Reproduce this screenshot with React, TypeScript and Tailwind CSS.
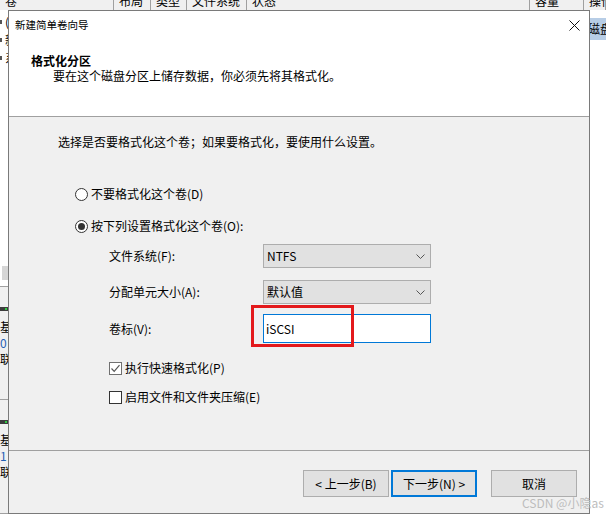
import React from 'react';

// Column headers of the disk management list behind the wizard
const headerCols = [
  { label: '卷', w: 'w-[114px]' },
  { label: '布局', w: 'w-[37px]' },
  { label: '类型', w: 'w-[36px]' },
  { label: '文件系统', w: 'w-[60px]' },
  { label: '状态', w: 'w-[283px]' },
  { label: '容量', w: 'w-[54px]' },
  { label: '操作', w: 'flex-1' },
];

const Radio = ({ checked, label }: { checked?: boolean; label: string }) => (
  <div className="flex h-[16px] items-center gap-[3px]">
    <span className="flex h-[13px] w-[13px] items-center justify-center rounded-full border border-[#333333] bg-white">
      {checked && <span className="h-[7px] w-[7px] rounded-full bg-[#333333]" />}
    </span>
    <span>{label}</span>
  </div>
);

const Check = ({ checked, label }: { checked?: boolean; label: string }) => (
  <div className="flex h-[16px] items-center gap-[3px]">
    <span
      className={`flex h-[13px] w-[13px] items-center justify-center border bg-white ${
        checked ? 'border-[#707070]' : 'border-[#333333]'
      }`}
    >
      {checked && (
        <svg width="11" height="11" viewBox="0 0 11 11">
          <path d="M1.5 5.5 L4.2 8.3 L9.5 2.2" fill="none" stroke="#555555" strokeWidth="1.2" />
        </svg>
      )}
    </span>
    <span>{label}</span>
  </div>
);

const Select = ({ value }: { value: string }) => (
  <div className="flex h-[24px] w-[168px] items-center justify-between border border-[#adadad] bg-[#e1e1e1] pl-[3px] pr-[5px]">
    <span>{value}</span>
    <svg width="9" height="5" viewBox="0 0 9 5">
      <path d="M0.5 0.5 L4.5 4.5 L8.5 0.5" fill="none" stroke="#555555" strokeWidth="1" />
    </svg>
  </div>
);

const Button = ({ label, primary }: { label: string; primary?: boolean }) => (
  <div
    className={`flex h-[27px] w-[86px] items-center justify-center bg-[#e1e1e1] ${
      primary ? 'border-2 border-[#0078d7]' : 'border border-[#adadad]'
    }`}
  >
    {label}
  </div>
);

export default function App() {
  return (
    <div className="relative h-[514px] w-[606px] overflow-hidden bg-white font-['Noto_Sans_CJK_SC',sans-serif] text-[12px] text-black">
      {/* Background: disk management window */}
      <div className="flex h-[10px] bg-[#f0f0f0]">
        {headerCols.map((c) => (
          <div key={c.label} className={`${c.w} h-[10px] overflow-hidden border-r border-[#a0a0a0] pl-[5px]`}>
            <div className="-mt-[7px] whitespace-nowrap leading-[16px]">{c.label}</div>
          </div>
        ))}
      </div>
      <div className="flex h-[504px]">
        <div className="flex w-[584px] flex-col">
          {/* volume list, mostly hidden behind the dialog */}
          <div className="flex h-[265px] w-[8px] flex-col gap-[2px] overflow-hidden pt-[4px]">
            {['(', '新', '系'].map((v) => (
              <div key={v} className="flex h-[16px] items-center gap-[3px] whitespace-nowrap">
                <span className="h-[4px] w-[2px] shrink-0 bg-[#555555]" />
                <span>{v}</span>
              </div>
            ))}
          </div>
          <div className="ml-[2px] h-[15px] bg-[#d6d6d6]" />
          <div className="h-[7px] border-b border-[#a0a0a0]" />
          {/* disk rows */}
          {['0', '1'].map((d) => (
            <div key={d} className="flex h-[117px] flex-col border-b border-[#a0a0a0] bg-[#f0f0f0] pt-[20px]">
              <div className="flex h-[4px] items-center bg-[#3c3c3c] pl-[5px]">
                <span className="h-[2px] w-[2px] bg-[#2ecc40]" />
              </div>
              <div className="mt-[8px] flex w-[8px] flex-col overflow-hidden whitespace-nowrap leading-[16px]">
                <span>基</span>
                <span className="text-[#1e5fb4]">{d}</span>
                <span>联</span>
              </div>
            </div>
          ))}
        </div>
        <div className="flex flex-1 flex-col overflow-hidden pl-[3px] pt-[8px]">
          <div className="flex h-[22px] items-center whitespace-nowrap bg-[#b7cde6] pl-[1px]">磁盘</div>
        </div>
      </div>

      {/* Wizard dialog */}
      <div className="absolute left-[8px] top-[10px] flex h-[504px] w-[582px] flex-col border border-[#7a7a7a] bg-[#f0f0f0]">
        <div className="h-[106px] border-b border-[#a0a0a0] bg-white">
          <div className="flex h-[28px] items-center justify-between pl-[6px] pr-[9px] text-[10.5px]">
            <span>新建简单卷向导</span>
            <svg width="11" height="11" viewBox="0 0 11 11">
              <path d="M0.5 0.5 L10.5 10.5 M10.5 0.5 L0.5 10.5" stroke="#111111" strokeWidth="1" />
            </svg>
          </div>
          <div className="mt-[14px] pl-[22px] font-bold leading-[15px]">格式化分区</div>
          <div className="pl-[44px] leading-[16px]">要在这个磁盘分区上储存数据，你必须先将其格式化。</div>
        </div>

        <div className="flex h-[334px] flex-col border-b border-[#a0a0a0] pt-[17px] leading-[16px]">
          <div className="pl-[49px]">选择是否要格式化这个卷；如果要格式化，要使用什么设置。</div>
          <div className="mt-[36px] pl-[66px]">
            <Radio label="不要格式化这个卷(D)" />
          </div>
          <div className="mt-[16px] pl-[66px]">
            <Radio checked label="按下列设置格式化这个卷(O):" />
          </div>
          <div className="mt-[10px] flex items-center pl-[100px]">
            <span className="w-[154px]">文件系统(F):</span>
            <Select value="NTFS" />
          </div>
          <div className="mt-[12px] flex items-center pl-[100px]">
            <span className="w-[154px]">分配单元大小(A):</span>
            <Select value="默认值" />
          </div>
          <div className="mt-[10px] flex items-center pl-[100px]">
            <span className="w-[154px]">卷标(V):</span>
            <div className="flex h-[29px] w-[168px] items-center border border-[#0078d7] bg-white pl-[2px]">iSCSI</div>
          </div>
          <div className="mt-[17px] pl-[100px]">
            <Check checked label="执行快速格式化(P)" />
          </div>
          <div className="mt-[13px] pl-[100px]">
            <Check label="启用文件和文件夹压缩(E)" />
          </div>
        </div>

        <div className="flex flex-1 items-start justify-end pr-[12px] pt-[19px]">
          <div className="flex gap-[2px]">
            <Button label="< 上一步(B)" />
            <Button primary label="下一步(N) >" />
          </div>
          <div className="ml-[14px]">
            <Button label="取消" />
          </div>
        </div>
      </div>

      {/* Red annotation box around the volume label */}
      <div className="absolute left-[251px] top-[305px] h-[42px] w-[103px] border-[3px] border-[#e3191c]" />

      {/* Watermark */}
      <div className="absolute left-[522px] top-[495px] whitespace-nowrap text-[12px] leading-[16px] text-[#bdbdbd]">
        CSDN @小隐as
      </div>
    </div>
  );
}
